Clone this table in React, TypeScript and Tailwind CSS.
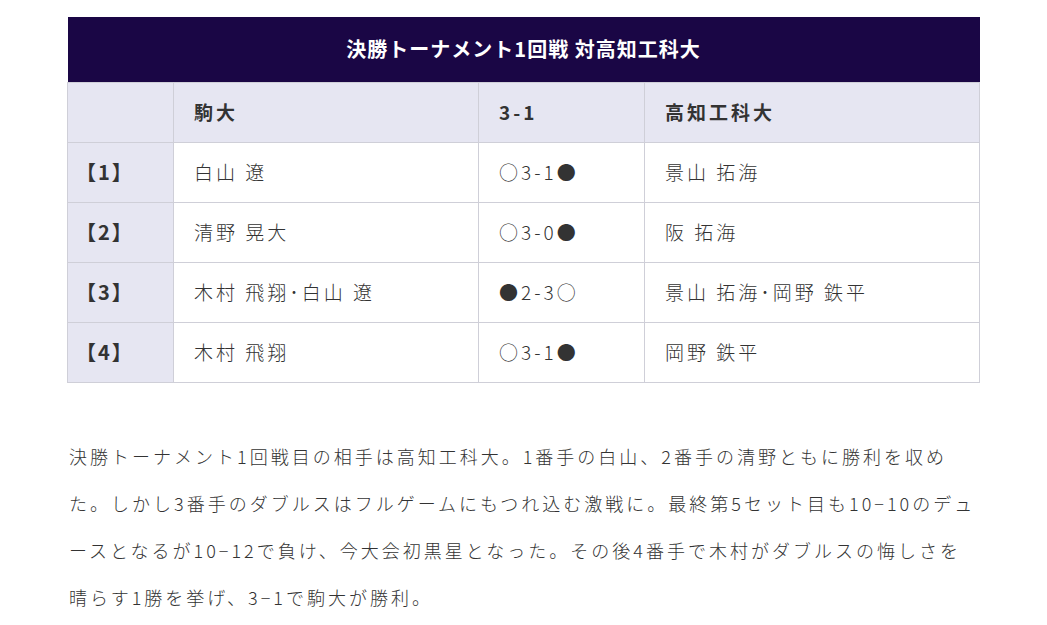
import React from "react";

const rows = [
  ["【1】", "白山 遼", "○3-1●", "景山 拓海"],
  ["【2】", "清野 晃大", "○3-0●", "阪 拓海"],
  ["【3】", "木村 飛翔･白山 遼", "●2-3○", "景山 拓海･岡野 鉄平"],
  ["【4】", "木村 飛翔", "○3-1●", "岡野 鉄平"],
];

export default function App() {
  return (
    <div
      className="min-h-[625px] bg-white text-[#333]"
      style={{ fontFamily: '"Noto Sans CJK JP", "Noto Sans", sans-serif' }}
    >
      <div className="mx-auto w-[913px] pt-[17px]">
        <table className="w-full border-collapse text-[19px] tracking-[3px]">
          <colgroup>
            <col className="w-[106px]" />
            <col className="w-[305px]" />
            <col className="w-[166px]" />
            <col />
          </colgroup>
          <thead>
            <tr className="h-[65px] bg-[#1a0645]">
              <th
                colSpan={4}
                className="text-center text-[20px] font-bold tracking-[1px] text-white"
              >
                決勝トーナメント1回戦 対高知工科大
              </th>
            </tr>
          </thead>
          <tbody>
            <tr className="h-[60px] bg-[#e6e6f2]">
              <td className="border border-[#cfcfd8]"></td>
              <td className="border border-[#cfcfd8] px-[20px] font-bold">駒大</td>
              <td className="border border-[#cfcfd8] px-[20px] font-bold">3-1</td>
              <td className="border border-[#cfcfd8] px-[20px] font-bold">高知工科大</td>
            </tr>
            {rows.map((r) => (
              <tr key={r[0]} className="h-[60px]">
                <td className="border border-[#cfcfd8] bg-[#e6e6f2] pl-[8px] text-[20px] font-bold tracking-[2px]">
                  {r[0]}
                </td>
                <td className="border border-[#cfcfd8] px-[20px] font-light">{r[1]}</td>
                <td className="border border-[#cfcfd8] px-[20px] font-light">{r[2]}</td>
                <td className="border border-[#cfcfd8] px-[20px] font-light">{r[3]}</td>
              </tr>
            ))}
          </tbody>
        </table>
        <p className="mt-[50px] pl-[2px] text-[18px] font-light leading-[47px] tracking-[3px] text-[#333]">
          決勝トーナメント1回戦目の相手は高知工科大。1番手の白山、2番手の清野ともに勝利を収めた。しかし3番手のダブルスはフルゲームにもつれ込む激戦に。最終第5セット目も10−10のデュースとなるが10−12で負け、今大会初黒星となった。その後4番手で木村がダブルスの悔しさを晴らす1勝を挙げ、3−1で駒大が勝利。
        </p>
      </div>
    </div>
  );
}
